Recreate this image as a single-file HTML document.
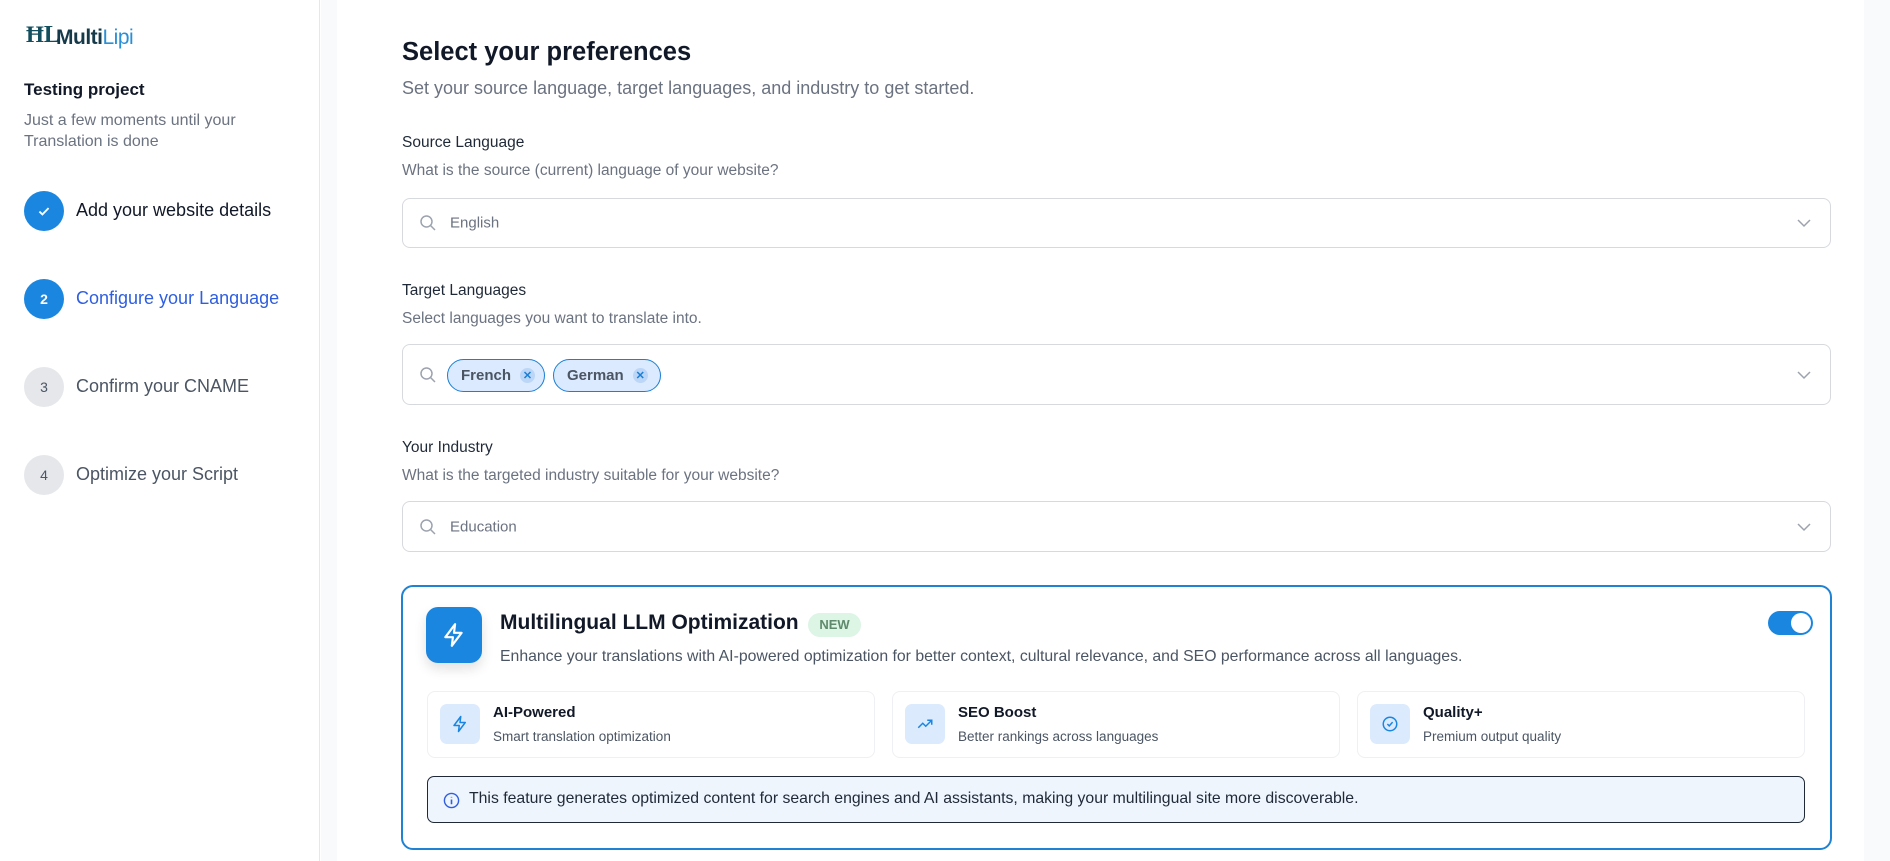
<!DOCTYPE html>
<html><head><meta charset="utf-8"><style>
*{box-sizing:border-box;margin:0;padding:0}
body{width:1890px;height:861px;overflow:hidden;background:#fff;font-family:"Liberation Sans",sans-serif;position:relative;color:#111827}
.a{position:absolute;white-space:nowrap}
.side{position:absolute;left:0;top:0;width:320px;height:861px;border-right:1px solid #e5e7eb;background:#fff}
.strip{position:absolute;left:321px;top:0;width:16px;height:861px;background:#f9fafb}
.rstrip{position:absolute;left:1864px;top:0;width:26px;height:861px;background:#f9fafb}
.circ{position:absolute;width:40px;height:40px;border-radius:50%;display:flex;align-items:center;justify-content:center;font-size:14px;font-weight:bold}
.st{font-size:18px;color:#4b5563}
.lbl{font-size:15.5px;color:#1f2937}
.q{font-size:15.5px;color:#6b7280}
.box{position:absolute;left:402px;width:1429px;border:1px solid #d6d9de;border-radius:8px;background:#fff}
.chev{position:absolute;right:18px;top:50%;margin-top:-7px}
.srch{position:absolute;left:16px;top:50%;margin-top:-9px}
.ph{position:absolute;left:47px;top:50%;transform:translateY(-50%);font-size:15px;color:#6b7280}
.chip{position:absolute;top:14px;height:33px;border:1px solid #1a7fd6;background:#dbeafe;border-radius:17px;font-size:15px;color:#4b5563;font-weight:bold;display:flex;align-items:center;padding-left:13px}
.x{width:15px;height:15px;border-radius:50%;background:#bcd6f7;color:#1a7fd6;font-size:11px;display:flex;align-items:center;justify-content:center;margin-left:9px}
.fc{position:absolute;top:691px;width:448px;height:67px;border:1px solid #eef0f3;border-radius:8px}
.fi{position:absolute;left:12px;top:12px;width:40px;height:40px;border-radius:7px;background:#dceafd;display:flex;align-items:center;justify-content:center}
.ft{position:absolute;left:65px;top:12px;font-size:15px;font-weight:bold;color:#111827}
.fs{position:absolute;left:65px;top:37px;font-size:13.5px;color:#4b5563}
</style></head><body>
<div class="side"></div><div class="strip"></div><div class="rstrip"></div>

<div class="a" style="left:26px;top:22px;font-size:23px;font-weight:bold;color:#134e5e;font-family:'Liberation Serif',serif">Ħ<span style="font-size:24px">L</span></div>
<div class="a" style="left:56px;top:26px;font-size:21px;font-weight:bold;color:#163a4a;letter-spacing:-0.5px">Multi<span style="color:#2a8fd6;font-weight:normal">Lipi</span></div>

<div class="a" style="left:24px;top:80px;font-size:17px;font-weight:bold;color:#111827">Testing project</div>
<div class="a" style="left:24px;top:110px;font-size:16px;color:#6b7280;line-height:21px">Just a few moments until your<br>Translation is done</div>

<div class="circ" style="left:24px;top:191px;background:#1a86e0;color:#fff"><svg width="16" height="16" viewBox="0 0 14 14"><path d="M3 7.5l2.6 2.5L11 4.5" stroke="#fff" stroke-width="1.6" fill="none"/></svg></div>
<div class="a st" style="left:76px;top:200px;color:#111827">Add your website details</div>
<div class="circ" style="left:24px;top:279px;background:#1a86e0;color:#fff">2</div>
<div class="a st" style="left:76px;top:288px;color:#2f5fe0">Configure your Language</div>
<div class="circ" style="left:24px;top:367px;background:#e5e7eb;color:#4b5563;font-weight:normal">3</div>
<div class="a st" style="left:76px;top:376px">Confirm your CNAME</div>
<div class="circ" style="left:24px;top:455px;background:#e5e7eb;color:#4b5563;font-weight:normal">4</div>
<div class="a st" style="left:76px;top:464px">Optimize your Script</div>

<div class="a" style="left:402px;top:38px;font-size:25.5px;font-weight:bold;color:#111827">Select your preferences</div>
<div class="a" style="left:402px;top:78px;font-size:18px;color:#6b7280">Set your source language, target languages, and industry to get started.</div>

<div class="a lbl" style="left:402px;top:134px">Source Language</div>
<div class="a q" style="left:402px;top:162px">What is the source (current) language of your website?</div>
<div class="box" style="top:198px;height:50px">
<svg class="srch" width="18" height="18" viewBox="0 0 18 18"><circle cx="7.5" cy="7.5" r="5.5" stroke="#9ca3af" stroke-width="1.5" fill="none"/><path d="M11.5 11.5l4.5 4.5" stroke="#9ca3af" stroke-width="1.5"/></svg>
<div class="ph">English</div>
<svg class="chev" width="16" height="14" viewBox="0 0 16 14"><path d="M2 4l6 6 6-6" stroke="#9ca3af" stroke-width="1.5" fill="none"/></svg></div>

<div class="a lbl" style="left:402px;top:282px">Target Languages</div>
<div class="a q" style="left:402px;top:310px">Select languages you want to translate into.</div>
<div class="box" style="top:344px;height:61px">
<svg class="srch" width="18" height="18" viewBox="0 0 18 18"><circle cx="7.5" cy="7.5" r="5.5" stroke="#9ca3af" stroke-width="1.5" fill="none"/><path d="M11.5 11.5l4.5 4.5" stroke="#9ca3af" stroke-width="1.5"/></svg>
<div class="chip" style="left:44px;width:98px">French<span class="x">✕</span></div>
<div class="chip" style="left:150px;width:108px">German<span class="x">✕</span></div>
<svg class="chev" width="16" height="14" viewBox="0 0 16 14"><path d="M2 4l6 6 6-6" stroke="#9ca3af" stroke-width="1.5" fill="none"/></svg></div>

<div class="a lbl" style="left:402px;top:439px">Your Industry</div>
<div class="a q" style="left:402px;top:467px">What is the targeted industry suitable for your website?</div>
<div class="box" style="top:501px;height:51px">
<svg class="srch" width="18" height="18" viewBox="0 0 18 18"><circle cx="7.5" cy="7.5" r="5.5" stroke="#9ca3af" stroke-width="1.5" fill="none"/><path d="M11.5 11.5l4.5 4.5" stroke="#9ca3af" stroke-width="1.5"/></svg>
<div class="ph">Education</div>
<svg class="chev" width="16" height="14" viewBox="0 0 16 14"><path d="M2 4l6 6 6-6" stroke="#9ca3af" stroke-width="1.5" fill="none"/></svg></div>

<div style="position:absolute;left:401px;top:585px;width:1431px;height:265px;border:2px solid #1f82d2;border-radius:12px"></div>
<div style="position:absolute;left:426px;top:607px;width:56px;height:56px;border-radius:12px;background:#1a86e0;box-shadow:0 6px 12px rgba(0,0,0,.12);display:flex;align-items:center;justify-content:center">
<svg width="26" height="26" viewBox="0 0 24 24"><path d="M13 2L4 14h7l-1 8 9-12h-7l1-8z" stroke="#fff" stroke-width="2" fill="none" stroke-linejoin="round"/></svg></div>
<div class="a" style="left:500px;top:611px;font-size:21px;font-weight:bold;color:#111827">Multilingual LLM Optimization</div>
<div class="a" style="left:808px;top:613px;width:53px;height:24px;border-radius:12px;background:#dcf5e4;color:#5f8a6c;font-size:13px;font-weight:bold;text-align:center;line-height:24px">NEW</div>
<div class="a" style="left:500px;top:648px;font-size:15.8px;color:#4b5563">Enhance your translations with AI-powered optimization for better context, cultural relevance, and SEO performance across all languages.</div>
<div class="a" style="left:1768px;top:611px;width:45px;height:24px;border-radius:12px;background:#1a86e0"><div style="position:absolute;right:2px;top:2px;width:20px;height:20px;border-radius:50%;background:#fff"></div></div>

<div class="fc" style="left:427px"><div class="fi"><svg width="18" height="18" viewBox="0 0 24 24"><path d="M13 2L4 14h7l-1 8 9-12h-7l1-8z" stroke="#1a86e0" stroke-width="2" fill="none" stroke-linejoin="round"/></svg></div><div class="ft">AI-Powered</div><div class="fs">Smart translation optimization</div></div>
<div class="fc" style="left:892px"><div class="fi"><svg width="18" height="18" viewBox="0 0 24 24"><path d="M3 17l6-6 4 4 8-8M15 7h6v6" stroke="#1a86e0" stroke-width="2" fill="none"/></svg></div><div class="ft">SEO Boost</div><div class="fs">Better rankings across languages</div></div>
<div class="fc" style="left:1357px"><div class="fi"><svg width="18" height="18" viewBox="0 0 24 24"><circle cx="12" cy="12" r="9" stroke="#1a86e0" stroke-width="2" fill="none"/><path d="M8.5 12l2.5 2.5 4.5-5" stroke="#1a86e0" stroke-width="2" fill="none"/></svg></div><div class="ft">Quality+</div><div class="fs">Premium output quality</div></div>

<div style="position:absolute;left:427px;top:776px;width:1378px;height:47px;border:1px solid #1f2937;border-radius:7px;background:#eef5fd">
<svg style="position:absolute;left:15px;top:15px" width="17" height="17" viewBox="0 0 18 18"><circle cx="9" cy="9" r="7.5" stroke="#2f5fe0" stroke-width="1.5" fill="none"/><path d="M9 8v5M9 5.2v.6" stroke="#2f5fe0" stroke-width="1.7"/></svg>
<div class="a" style="left:41px;top:13px;font-size:15.8px;color:#1f2937">This feature generates optimized content for search engines and AI assistants, making your multilingual site more discoverable.</div></div>
</body></html>
